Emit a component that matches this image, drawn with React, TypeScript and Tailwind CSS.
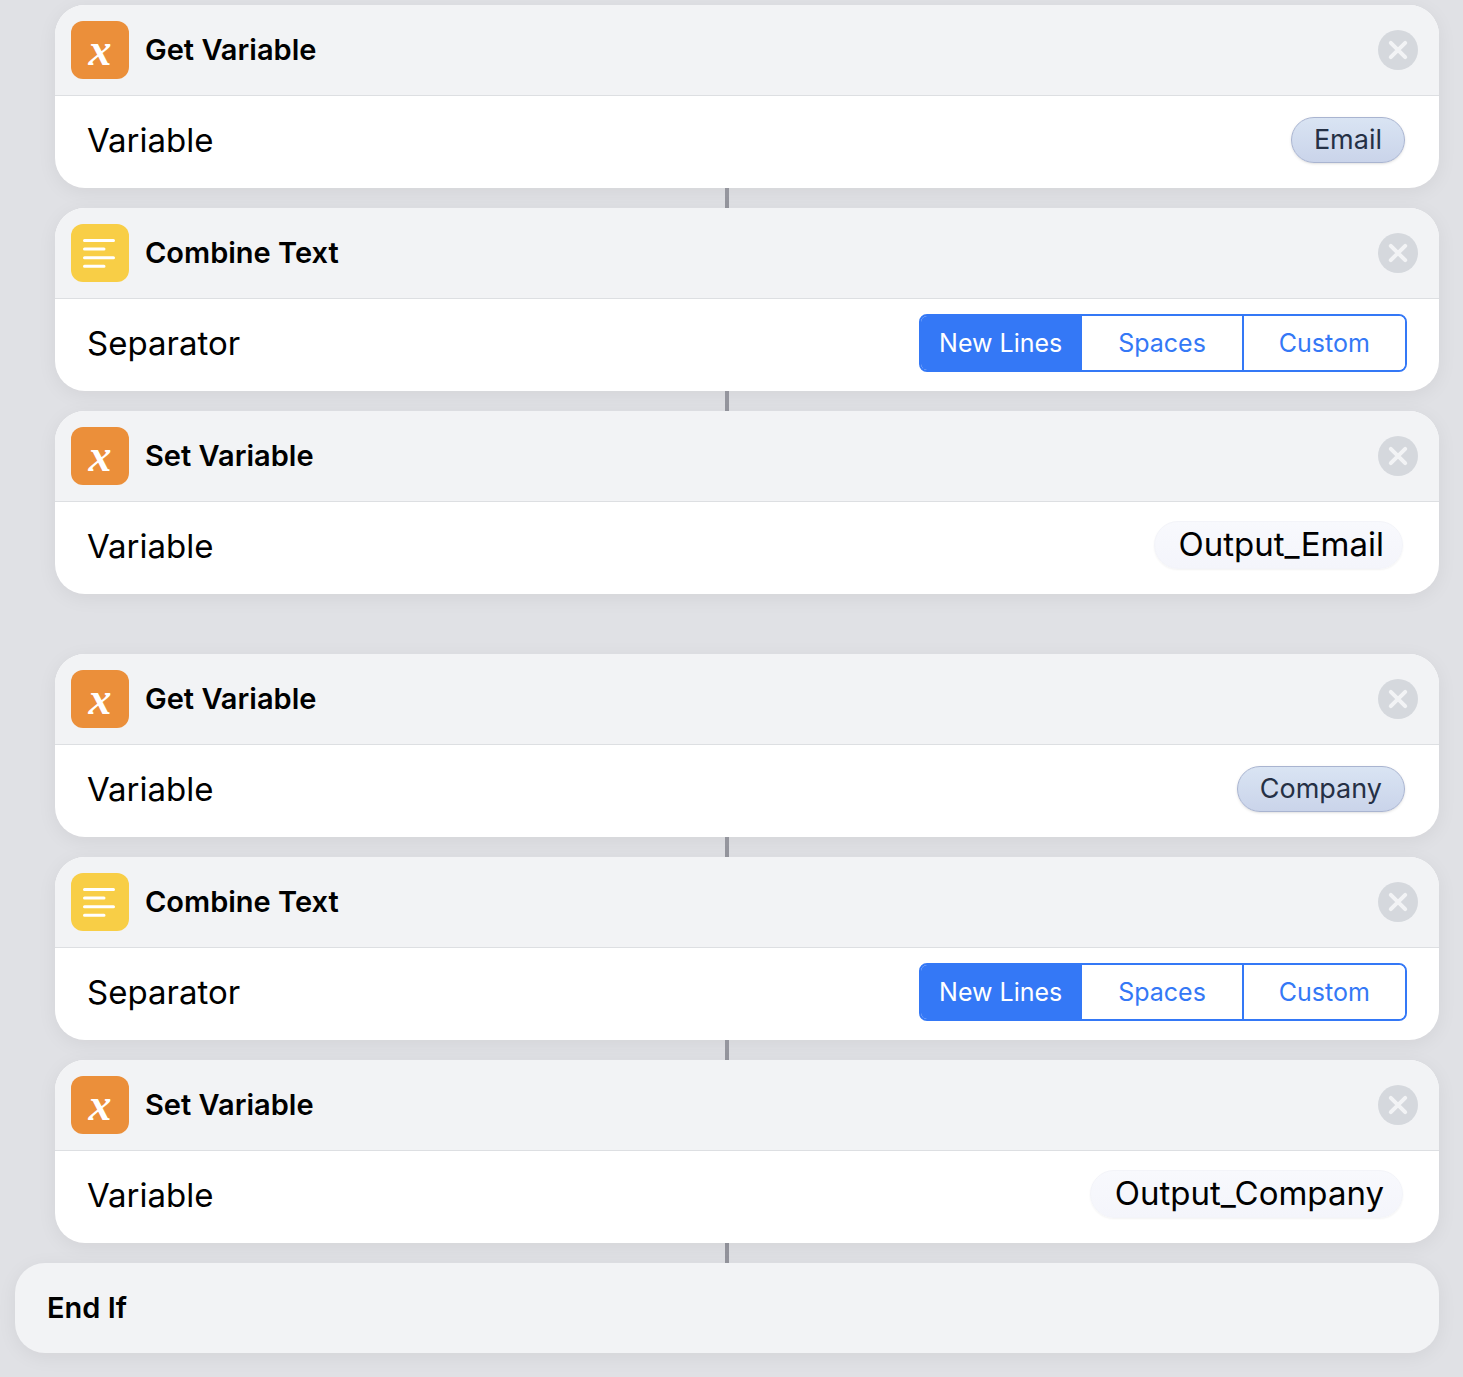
import { useState } from "react";
import clsx from "clsx";

type Action =
  | { kind: "get"; variable: string }
  | { kind: "combine" }
  | { kind: "set"; variable: string };

const GROUPS: Action[][] = [
  [
    { kind: "get", variable: "Email" },
    { kind: "combine" },
    { kind: "set", variable: "Output_Email" },
  ],
  [
    { kind: "get", variable: "Company" },
    { kind: "combine" },
    { kind: "set", variable: "Output_Company" },
  ],
];

const TITLES = {
  get: "Get Variable",
  combine: "Combine Text",
  set: "Set Variable",
};

const SEPARATORS = ["New Lines", "Spaces", "Custom"];

function VariableIcon() {
  return (
    <span className="flex size-[58px] items-center justify-center rounded-xl bg-[#eb8f3a] pb-px font-['Liberation_Serif',serif] text-[46px] leading-none font-bold text-white italic">
      x
    </span>
  );
}

function TextIcon() {
  return (
    <span className="flex size-[58px] rounded-xl bg-[#f8ce46]">
      <svg viewBox="0 0 58 58" className="size-full" aria-hidden="true">
        <path
          d="M13.5 16.5h29M13.5 25.1h19.5M13.5 33.7h29M13.5 42.3h19.5"
          stroke="#fff"
          strokeWidth="3"
          strokeLinecap="round"
        />
      </svg>
    </span>
  );
}

function RemoveButton({ title }: { title: string }) {
  return (
    <button
      type="button"
      aria-label={`Remove ${title}`}
      className="flex size-10 items-center justify-center rounded-full bg-[#d5d8dd]"
    >
      <svg viewBox="0 0 40 40" className="size-full" aria-hidden="true">
        <path
          d="M12.8 12.8l14.4 14.4M27.2 12.8L12.8 27.2"
          stroke="#f2f3f5"
          strokeWidth="4"
          strokeLinecap="round"
        />
      </svg>
    </button>
  );
}

function SeparatorPicker() {
  const [selected, setSelected] = useState(SEPARATORS[0]);

  return (
    <div
      role="group"
      aria-label="Separator"
      className="mb-0.5 grid h-[58px] w-[488px] grid-cols-3 divide-x-2 divide-[#3478f6] overflow-hidden rounded-lg border-2 border-[#3478f6] text-[25px]"
    >
      {SEPARATORS.map((name) => (
        <button
          key={name}
          type="button"
          aria-pressed={selected === name}
          onClick={() => setSelected(name)}
          className={clsx(
            "pt-0.5 whitespace-nowrap",
            selected === name ? "bg-[#3478f6] text-white" : "bg-white text-[#3478f6]"
          )}
        >
          {name}
        </button>
      ))}
    </div>
  );
}

function ActionBody({ action }: { action: Action }) {
  if (action.kind === "combine") {
    return (
      <>
        <span>Separator</span>
        <SeparatorPicker />
      </>
    );
  }
  if (action.kind === "get") {
    return (
      <>
        <span>Variable</span>
        <button
          type="button"
          className="mr-0.5 mb-0.5 h-[46px] rounded-3xl border border-[#a9b4d0] bg-linear-to-b from-[#d9e4f3] to-[#cad4ea] px-[22px] text-[27px] text-[#253045] shadow-sm"
        >
          {action.variable}
        </button>
      </>
    );
  }
  const id = `variable-${action.variable}`;
  return (
    <>
      <label htmlFor={id}>Variable</label>
      <input
        id={id}
        type="text"
        defaultValue={action.variable}
        className="mr-1 mb-1 field-sizing-content h-12 rounded-3xl border border-[#f3f4f9] bg-linear-to-b from-[#f8f9fd] to-[#f4f5fb] pr-[18px] pl-6 text-[33px] shadow-xs outline-none"
      />
    </>
  );
}

function ActionCard({ action }: { action: Action }) {
  const title = TITLES[action.kind];

  return (
    <section className="ml-10 overflow-hidden rounded-[30px] bg-white shadow-[0_4px_20px_rgba(0,0,0,0.06)]">
      <header className="flex h-[91px] items-center gap-4 border-b border-[#dddfe2] bg-[#f2f3f5] pr-[21px] pl-4">
        {action.kind === "combine" ? <TextIcon /> : <VariableIcon />}
        <h2 className="flex-1 text-[29px] font-semibold">{title}</h2>
        <RemoveButton title={title} />
      </header>
      <div className="flex h-[92px] items-center justify-between px-8 pb-0.5 text-[33px]">
        <ActionBody action={action} />
      </div>
    </section>
  );
}

function Connector() {
  return <div className="mx-auto h-5 w-1 bg-[#95969e]" />;
}

export default function App() {
  return (
    <main className="min-h-screen bg-[#e0e1e5] pt-[5px] pr-6 pb-6 pl-[15px] font-['Inter','Liberation_Sans',sans-serif] text-black">
      <div className="flex flex-col gap-[60px]">
        {GROUPS.map((actions, g) => (
          <div key={g}>
            {actions.map((action, i) => (
              <div key={i}>
                {i > 0 && <Connector />}
                <ActionCard action={action} />
              </div>
            ))}
          </div>
        ))}
      </div>
      <Connector />
      <section className="flex h-[90px] items-center rounded-[30px] bg-[#f2f3f5] px-8 shadow-[0_4px_20px_rgba(0,0,0,0.06)]">
        <h2 className="text-[29px] font-semibold">End If</h2>
      </section>
    </main>
  );
}
